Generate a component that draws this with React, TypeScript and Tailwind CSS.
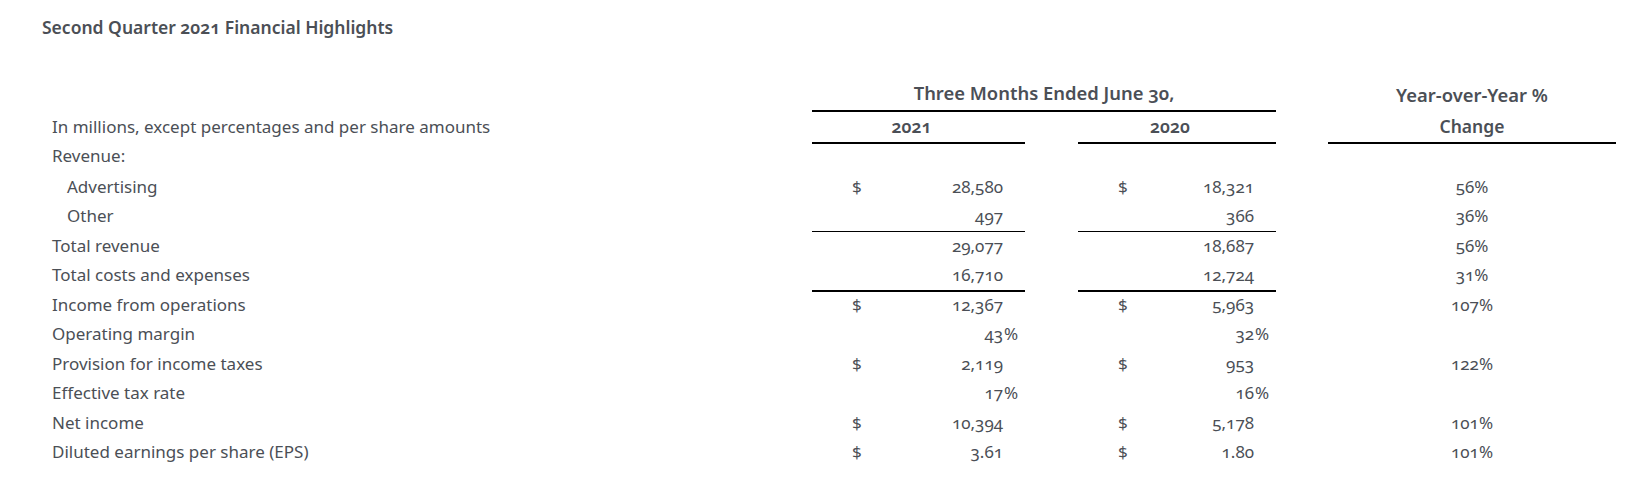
type Cell = { v: string; d?: boolean; pct?: boolean } | null;

type Row = {
  label: string;
  indent?: boolean;
  a?: Cell;
  b?: Cell;
  c?: string;
  line?: "thin" | "thick";
};

const ROWS: Row[] = [
  { label: "Advertising", indent: true, a: { v: "28,580", d: true }, b: { v: "18,321", d: true }, c: "56%" },
  { label: "Other", indent: true, a: { v: "497" }, b: { v: "366" }, c: "36%" },
  { label: "Total revenue", a: { v: "29,077" }, b: { v: "18,687" }, c: "56%", line: "thin" },
  { label: "Total costs and expenses", a: { v: "16,710" }, b: { v: "12,724" }, c: "31%" },
  { label: "Income from operations", a: { v: "12,367", d: true }, b: { v: "5,963", d: true }, c: "107%", line: "thick" },
  { label: "Operating margin", a: { v: "43", pct: true }, b: { v: "32", pct: true } },
  { label: "Provision for income taxes", a: { v: "2,119", d: true }, b: { v: "953", d: true }, c: "122%" },
  { label: "Effective tax rate", a: { v: "17", pct: true }, b: { v: "16", pct: true } },
  { label: "Net income", a: { v: "10,394", d: true }, b: { v: "5,178", d: true }, c: "101%" },
  { label: "Diluted earnings per share (EPS)", a: { v: "3.61", d: true }, b: { v: "1.80", d: true }, c: "101%" },
];

const GRID = "grid grid-cols-[760px_213px_53px_198px_52px_288px]";

function Amount({ cell, line }: { cell?: Cell; line?: Row["line"] }) {
  const rule =
    line === "thick" ? "shadow-[inset_0_2px_0_#000]" : line === "thin" ? "shadow-[inset_0_1px_0_#000]" : "";
  return (
    <div className={`flex ${rule}`}>
      <div className="w-[40px] shrink-0" />
      <div className="w-[20px] shrink-0">{cell?.d ? "$" : ""}</div>
      <div className="flex-1 text-right">{cell?.v}</div>
      <div className="w-[22px] shrink-0 pl-[1px]">{cell?.pct ? "%" : ""}</div>
    </div>
  );
}

export default function App() {
  return (
    <div className="min-h-screen w-full bg-white text-[#4b4f56] font-['Noto_Sans',sans-serif] oldstyle-nums">
      <h1 className="pl-[42px] pt-[15px] text-[17.5px] leading-[24px] font-semibold">
        Second Quarter 2021 Financial Highlights
      </h1>

      <div className="mt-[41px] pl-[52px]">
        {/* header row 1 */}
        <div className={`${GRID} h-[32px]`}>
          <div />
          <div className="col-span-3 flex items-end justify-center border-b-2 border-black pb-[5px] text-[18.4px] leading-[24px] font-semibold">
            Three Months Ended June 30,
          </div>
          <div />
          <div className="flex items-end justify-center pb-[5px] text-[18.4px] leading-[24px] font-semibold">
            Year-over-Year %
          </div>
        </div>

        {/* header row 2 */}
        <div className={`${GRID} h-[32px]`}>
          <div className="pt-[3px] text-[17px] leading-[24px]">In millions, except percentages and per share amounts</div>
          <div className="border-b-2 border-black pt-[2px] pr-[14px] text-center text-[17.5px] leading-[24px] font-semibold">2021</div>
          <div />
          <div className="border-b-2 border-black pt-[2px] pr-[14px] text-center text-[17.5px] leading-[24px] font-semibold">2020</div>
          <div />
          <div className="border-b-2 border-black pt-[2px] text-center text-[17.5px] leading-[24px] font-semibold">Change</div>
        </div>

        {/* revenue heading */}
        <div className={`${GRID} h-[28px]`}>
          <div className="text-[17px] leading-[24px]">Revenue:</div>
        </div>

        {ROWS.map((r) => (
          <div key={r.label} className={`${GRID} h-[29.48px] text-[17px] leading-[29.48px]`}>
            <div className={r.indent ? "pl-[15px]" : ""}>{r.label}</div>
            <Amount cell={r.a} line={r.line} />
            <div />
            <Amount cell={r.b} line={r.line} />
            <div />
            <div className="text-center">{r.c}</div>
          </div>
        ))}
      </div>
    </div>
  );
}
